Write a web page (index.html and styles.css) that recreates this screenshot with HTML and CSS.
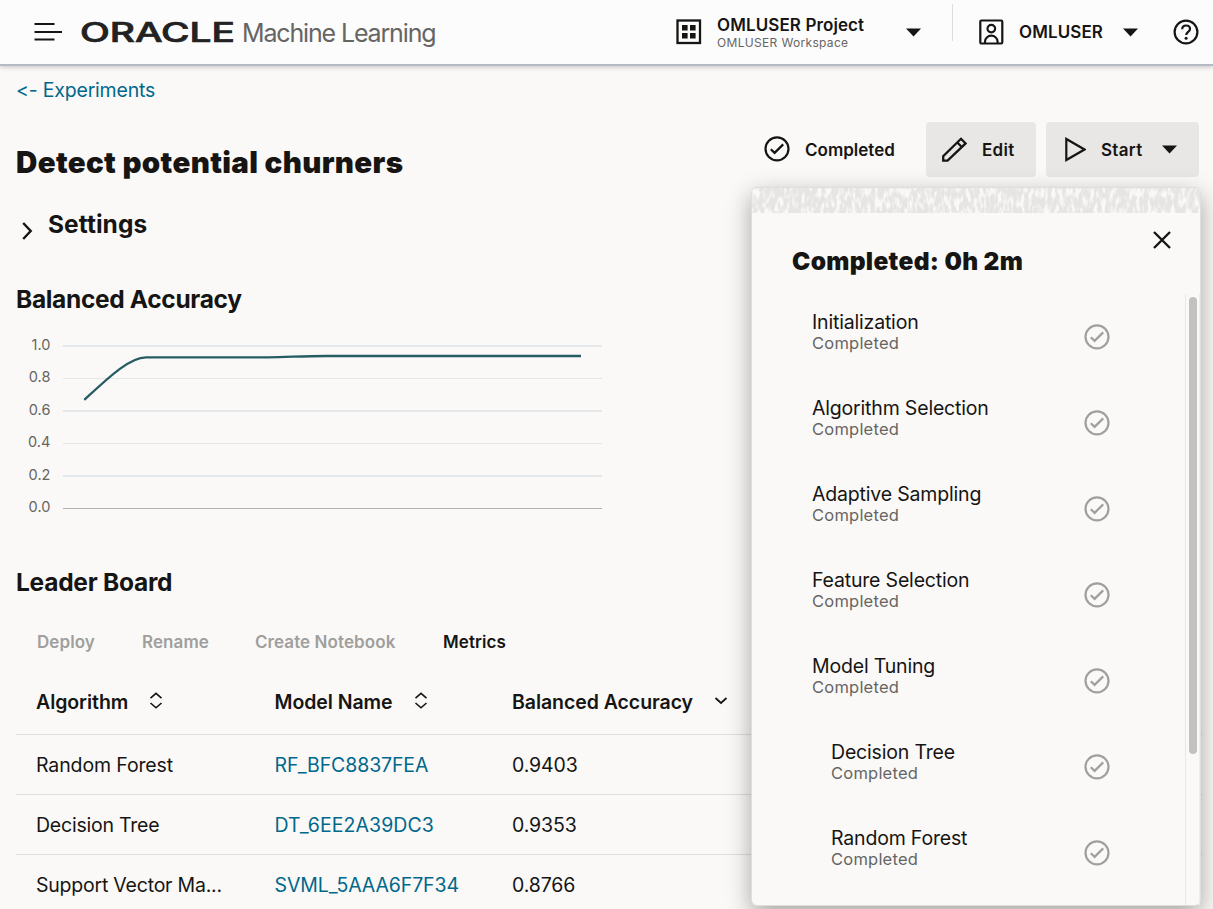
FILE: index.html
```html
<!DOCTYPE html>
<html lang="en">
<head>
<meta charset="utf-8">
<title>Oracle Machine Learning</title>
<link rel="stylesheet" href="styles.css">
</head>
<body>
<svg class="defs" width="0" height="0">
  <symbol id="check" viewBox="0 0 26 26"><g fill="none" stroke="currentColor" stroke-width="2.2"><circle cx="13" cy="12.800" r="11.500"/><path d="M6.800 13.200l3.800 3.700 8.600-8.500"/></g></symbol>
  <symbol id="caret" viewBox="0 0 15 9"><path d="M0 .5h15L7.5 8.5z" fill="currentColor"/></symbol>
  <symbol id="sort" viewBox="0 0 14 18"><path d="M1.500 6.200L7 1.400l5.500 4.800M1.500 11l5.500 4.800 5.500-4.800" fill="none" stroke="currentColor" stroke-width="1.600"/></symbol>
</svg>
<header class="topbar">
  <svg class="menu" width="28" height="20" viewBox="0 0 28 20"><path d="M.5 2h20M.5 10h27.500M.5 17.500h20" stroke="currentColor" stroke-width="2.200"/></svg>
  <svg class="brand" width="157" height="40" viewBox="0 0 157 40"><text class="brand-text" x="0" y="30" textLength="155" lengthAdjust="spacingAndGlyphs">ORACLE</text></svg>
  <span class="product">Machine Learning</span>
  <div class="project">
    <svg width="26" height="26" viewBox="0 0 26 26"><rect x="1.500" y="1.500" width="22.500" height="22.500" fill="none" stroke="currentColor" stroke-width="2.300"/><path d="M6 6h5.600v5.600H6zM14 6h5.600v5.600H14zM6 14h5.600v5.600H6zM14 14h5.600v5.600H14z" fill="currentColor"/></svg>
    <div class="project-names"><strong class="project-title">OMLUSER Project</strong><span class="workspace">OMLUSER Workspace</span></div>
  </div>
  <svg class="caret caret-project"><use href="#caret"/></svg>
  <div class="divider"></div>
  <svg class="user" width="26" height="26" viewBox="0 0 26 26"><g fill="none" stroke="currentColor" stroke-width="2.200"><rect x="2.300" y="1.500" width="22" height="23" rx="1.200"/><circle cx="13.300" cy="9.600" r="3.800"/><path d="M7 24v-1.400a6.300 5.900 0 0 1 12.600 0V24"/></g></svg>
  <strong class="username">OMLUSER</strong>
  <svg class="caret caret-user"><use href="#caret"/></svg>
  <svg class="help" width="26" height="26" viewBox="0 0 26 26"><g fill="none" stroke="currentColor" stroke-width="2.200"><circle cx="13" cy="13" r="11.400"/><path d="M9.200 10.200c0-2.200 1.600-3.700 3.900-3.700s3.900 1.400 3.900 3.400c0 2.800-3.800 3-3.800 6"/></g><circle cx="13.100" cy="19.200" r="1.500" fill="currentColor"/></svg>
</header>

<main class="page">
  <a class="back">&lt;- Experiments</a>
  <div class="title-row">
    <h1 class="title">Detect potential churners</h1>
    <div class="status"><svg width="26" height="26"><use href="#check"/></svg><span>Completed</span></div>
    <div class="button edit"><svg width="26" height="26" viewBox="0 0 26 26"><path d="M2.200 23.600v-4.300L20 1.800l4.600 4.600L6.600 23.600zM16.300 5.500l4.500 4.500" fill="none" stroke="currentColor" stroke-width="2.300"/></svg><span>Edit</span></div>
    <div class="button start"><svg width="22" height="26" viewBox="0 0 22 26"><path d="M2.300 2v21L20.500 12.500z" fill="none" stroke="currentColor" stroke-width="2.200"/></svg><span>Start</span><svg class="caret"><use href="#caret"/></svg></div>
  </div>
  <div class="settings"><svg width="12" height="18" viewBox="0 0 12 18"><path d="M1.200 1l7.500 8-7.500 8" fill="none" stroke="currentColor" stroke-width="2.400"/></svg><h2 class="heading">Settings</h2></div>
  <h2 class="heading chart-title">Balanced Accuracy</h2>
  <div class="chart">
    <div class="axis"><span>1.0</span><span>0.8</span><span>0.6</span><span>0.4</span><span>0.2</span><span>0.0</span></div>
    <svg width="540" height="170" viewBox="0 0 540 170">
      <path d="M0 6h539M0 71h539M0 136h539" stroke="#e4e8ea" stroke-width="2"/>
      <path d="M0 38.500h539M0 103.500h539" stroke="#e2e7e9"/>
      <path d="M0 168.500h539" stroke="#b1b1af"/>
      <path d="M21.300 59.800C44 39 66 17.300 83 17.300H205C225 17.300 237 16 264 16H518" fill="none" stroke="#265c64" stroke-width="2.300"/>
    </svg>
  </div>
  <h2 class="heading board-title">Leader Board</h2>
  <nav class="actions"><span>Deploy</span><span>Rename</span><span>Create Notebook</span><span class="enabled">Metrics</span></nav>
  <div class="table">
    <div class="row head"><div class="c">Algorithm<svg class="sort"><use href="#sort"/></svg></div><div class="c">Model Name<svg class="sort"><use href="#sort"/></svg></div><div class="c">Balanced Accuracy<svg class="down" width="14" height="10" viewBox="0 0 14 10"><path d="M1.500 2l5.500 5 5.500-5" fill="none" stroke="currentColor" stroke-width="1.800"/></svg></div></div>
    <div class="row"><div class="c">Random Forest</div><a class="c link">RF_BFC8837FEA</a><div class="c num">0.9403</div></div>
    <div class="row"><div class="c tight">Decision Tree</div><a class="c link wide">DT_6EE2A39DC3</a><div class="c num">0.9353</div></div>
    <div class="row"><div class="c tight">Support Vector Ma...</div><a class="c link">SVML_5AAA6F7F34</a><div class="c num">0.8766</div></div>
  </div>
</main>

<aside class="progress">
  <svg class="texture" width="448" height="25">
    <filter id="weave" x="0" y="0" width="100%" height="100%" color-interpolation-filters="sRGB"><feTurbulence type="fractalNoise" baseFrequency="0.26 0.1" numOctaves="2" seed="8"/><feColorMatrix values="0 0 0 0 .98  0 0 0 0 .976  0 0 0 0 .969  4 0 0 0 -1.750"/></filter>
    <rect width="448" height="25" fill="#e6e5e4"/><rect width="448" height="25" filter="url(#weave)"/>
  </svg>
  <div class="panel-head"><h2 class="panel-title">Completed: 0h 2m</h2><svg class="close" width="18" height="18" viewBox="0 0 18 18"><path d="M1 1l16 16M17 1L1 17" stroke="currentColor" stroke-width="2.400"/></svg></div>
  <div class="panel-body">
    <div class="steps">
      <div class="step"><div><div class="name">Initialization</div><div class="state">Completed</div></div><svg class="tick"><use href="#check"/></svg></div>
      <div class="step"><div><div class="name">Algorithm Selection</div><div class="state">Completed</div></div><svg class="tick"><use href="#check"/></svg></div>
      <div class="step"><div><div class="name">Adaptive Sampling</div><div class="state">Completed</div></div><svg class="tick"><use href="#check"/></svg></div>
      <div class="step"><div><div class="name">Feature Selection</div><div class="state">Completed</div></div><svg class="tick"><use href="#check"/></svg></div>
      <div class="step"><div><div class="name">Model Tuning</div><div class="state">Completed</div></div><svg class="tick"><use href="#check"/></svg></div>
      <div class="step nested"><div><div class="name">Decision Tree</div><div class="state">Completed</div></div><svg class="tick"><use href="#check"/></svg></div>
      <div class="step nested"><div><div class="name">Random Forest</div><div class="state">Completed</div></div><svg class="tick"><use href="#check"/></svg></div>
    </div>
    <div class="scrollbar"><div class="thumb"></div></div>
  </div>
</aside>
</body>
</html>
```
FILE: styles.css
```css
* { box-sizing: border-box; }
body { margin: 0; width: 1213px; height: 909px; overflow: hidden; position: relative; background: #faf9f7; color: #161513; font-family: Inter, "Liberation Sans", sans-serif; font-size: 19.5px; letter-spacing: -.12px; font-feature-settings: "calt" 0; white-space: nowrap; }
h1, h2 { margin: 0; }
svg { display: block; flex: none; }
.defs { position: absolute; }
.topbar { display: flex; align-items: center; height: 66px; padding-left: 34px; background: #fcfcfc; border-bottom: 2px solid #b5bac3; box-shadow: 0 1px 5px rgba(0, 0, 0, .22); }
.brand { margin-left: 18px; overflow: visible; }
.brand-text { font-size: 26.500px; font-weight: 500; letter-spacing: 0; fill: #222; stroke: #222; stroke-width: .7px; }
.product { width: 195px; margin-left: 5px; margin-top: 2px; font-size: 25px; letter-spacing: -1.150px; color: #666563; }
.project { display: flex; align-items: center; gap: 15px; width: 230px; margin-left: 239px; }
.project-names { display: flex; flex-direction: column; }
.project-title { font-size: 17px; font-weight: 600; line-height: 20px; margin-top: 1px; letter-spacing: .1px; }
.workspace { font-size: 12px; line-height: 15px; color: #666563; letter-spacing: .33px; }
.caret { width: 15px; height: 9px; }
.divider { width: 1px; height: 37px; margin: -19px 25px 0 31px; background: #dedddb; }
.username { width: 85px; margin-left: 15px; font-size: 17px; font-weight: 600; letter-spacing: .1px; }
.caret-user { margin-left: 19px; }
.help { margin-left: 35px; }
.page { padding: 0 11px 0 16px; }
.back { display: block; height: 56px; padding-top: 12px; line-height: 24px; letter-spacing: -.2px; color: #00688c; }
.title-row { display: flex; height: 56px; letter-spacing: 0; }
.title { width: 748px; padding-top: 22px; font-size: 29.500px; font-weight: 900; line-height: 36px; letter-spacing: .34px; }
.status { display: flex; align-items: center; gap: 15px; width: 162px; font-size: 17px; font-weight: 600; height: 55px; }
.status svg { margin-top: -1px; }
.button { display: flex; align-items: center; height: 55px; background: #e8e7e5; border-radius: 4px; font-size: 17px; font-weight: 600; }
.edit { width: 110px; margin-right: 10px; padding-left: 15px; gap: 15px; letter-spacing: .3px; }
.start { width: 153px; padding-left: 18px; gap: 15px; letter-spacing: .3px; }
.start .caret { margin-left: 5px; }
.settings { display: flex; align-items: center; height: 40px; margin-top: 28px; padding-left: 6px; }
.settings svg { margin-top: 10px; }
.settings .heading { margin-left: 14px; margin-top: -4px; letter-spacing: .05px; }
.heading { font-size: 24.500px; font-weight: 700; line-height: 36px; letter-spacing: -.33px; }
.chart-title { margin-top: 35px; }
.chart { display: flex; height: 180px; margin-top: 23px; }
.axis { width: 34.500px; height: 180px; margin-right: 12.500px; margin-top: -5px; font-size: 14.500px; letter-spacing: .05px; color: #666563; display: grid; grid-template-rows: repeat(6, 32.400px); line-height: 19px; text-align: right; }
.board-title { margin-top: 44px; letter-spacing: -.25px; }
.actions { display: grid; grid-template-columns: 105px 113px 188px auto; height: 30px; margin-top: 27px; padding-left: 21px; line-height: 30px; font-size: 17px; font-weight: 600; letter-spacing: .08px; color: #a09f9d; }
.enabled { color: #161513; }
.table { margin-top: 14px; }
.row { display: grid; grid-template-columns: 238.500px 237.500px 1fr; height: 60px; line-height: 60px; padding-left: 20px; border-bottom: 1px solid #dfdedc; }
.head { height: 64px; line-height: 62px; font-weight: 600; letter-spacing: -.06px; }
.head .c { display: flex; }
.tight { letter-spacing: -.22px; }
.wide { letter-spacing: .08px; }
.sort { width: 14px; height: 18px; margin: 21px 0 0 21px; }
.down { margin: 25px 0 0 21px; }
.link { color: #00688c; }
.progress { position: absolute; left: 751px; top: 187px; width: 450px; height: 719px; background: #faf9f7; border: 1px solid #dfdedc; border-radius: 6px; box-shadow: 0 8px 24px rgba(0, 0, 0, .34); }
.texture { border-radius: 5px 5px 0 0; }
.panel-head { display: flex; justify-content: space-between; height: 81px; padding: 18px 29px 0 40px; }
.panel-title { padding-top: 14px; font-size: 24.500px; line-height: 32px; font-weight: 900; letter-spacing: .32px; }
.panel-body { display: flex; height: 611px; }
.steps { width: 433px; }
.step { display: flex; justify-content: space-between; height: 86px; padding: 16px 75px 0 60px; }
.nested { padding-left: 79px; }
.name { line-height: 24px; letter-spacing: -.18px; }
.state { font-size: 16.500px; line-height: 18px; letter-spacing: .22px; color: #666563; }
.tick { width: 26px; height: 26px; margin-top: 14px; color: #a09f9d; }
.scrollbar { width: 15px; padding: 3px 0 0 3px; border-left: 1px solid #e8e7e5; border-right: 1px solid #eeedeb; }
.thumb { width: 8px; height: 457px; border-radius: 4px; background: #c1c1c1; }
```
